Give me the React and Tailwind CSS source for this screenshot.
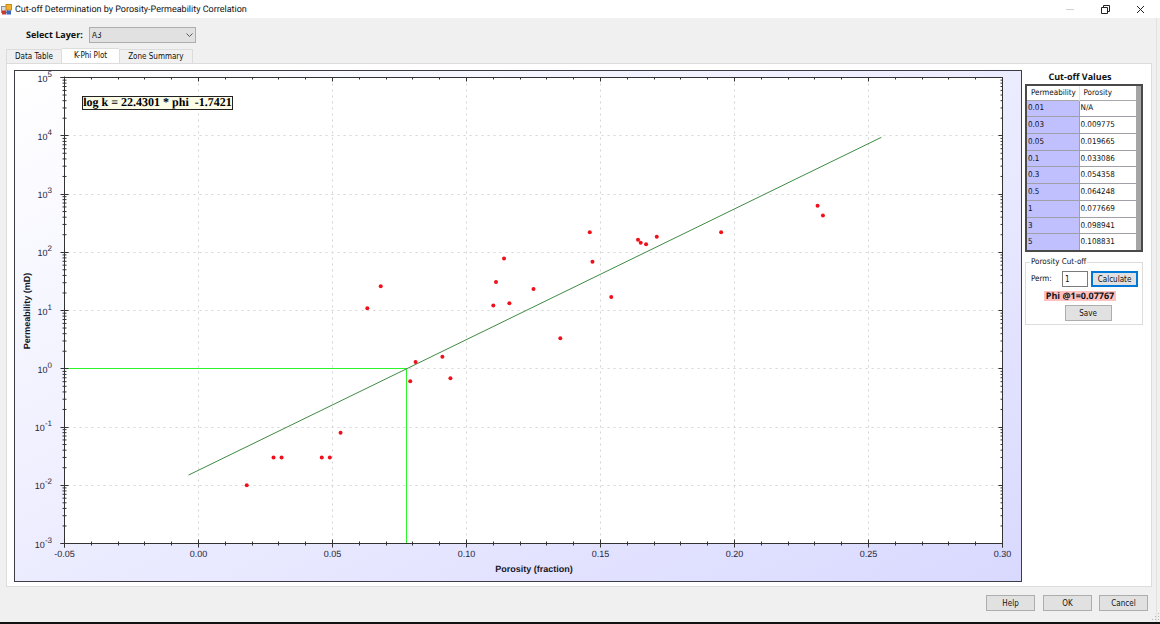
import React, { useState } from 'react';

const LAYERS = ['A1', 'A2', 'A3', 'B1'];

const TABS = [
    { id: 'data', label: 'Data Table' },
    { id: 'plot', label: 'K-Phi Plot' },
    { id: 'zones', label: 'Zone Summary' },
];

// [porosity (fraction), permeability (mD)]
const SAMPLES = [
    [0.018, 0.01], [0.028, 0.03], [0.031, 0.03], [0.046, 0.03], [0.049, 0.03],
    [0.053, 0.08], [0.063, 10.9], [0.068, 26], [0.079, 0.61], [0.081, 1.3],
    [0.091, 1.6], [0.094, 0.69], [0.11, 12.2], [0.111, 31], [0.114, 78],
    [0.116, 13.3], [0.125, 23.4], [0.135, 3.35], [0.146, 220], [0.147, 69],
    [0.154, 17], [0.164, 164], [0.165, 146], [0.167, 137], [0.171, 185],
    [0.195, 220], [0.231, 630], [0.233, 427],
];

const CUTOFFS = [
    ['0.01', 'N/A'],
    ['0.03', '0.009775'],
    ['0.05', '0.019665'],
    ['0.1', '0.033086'],
    ['0.3', '0.054358'],
    ['0.5', '0.064248'],
    ['1', '0.077669'],
    ['3', '0.098941'],
    ['5', '0.108831'],
];

// log k = SLOPE * phi + INTERCEPT
const SLOPE = 22.4301;
const INTERCEPT = -1.7421;

const phiAt = (perm) => (Math.log10(perm) - INTERCEPT) / SLOPE;

// Plot area inside the 1008 x 512 chart
const LEFT = 50.5;
const RIGHT = 988.5;
const TOP = 7.5;
const BOTTOM = 473.5;

const xOf = (phi) => LEFT + ((phi + 0.05) / 0.35) * (RIGHT - LEFT);
const yOf = (logK) => TOP + ((5 - logK) / 8) * (BOTTOM - TOP);
const snap = (v) => Math.floor(v) + 0.5;

const DECADES = [5, 4, 3, 2, 1, 0, -1, -2, -3];
const X_STEPS = Array.from({ length: 36 }, (_, i) => i);

function KPhiPlot({ perm }) {
    const phi = phiAt(perm);
    const cutX = snap(xOf(phi));
    const cutY = snap(yOf(Math.log10(perm)));

    return (
        <svg
            viewBox="0 0 1008 512"
            className="block h-auto w-full font-['Liberation_Sans',sans-serif]"
            role="img"
            aria-label="Permeability against porosity"
        >
            <defs>
                <linearGradient id="chartBg" x1="0" y1="0" x2="1" y2="1">
                    <stop offset="0" stopColor="#ffffff" />
                    <stop offset="1" stopColor="#d9d9ff" />
                </linearGradient>
            </defs>
            <rect x="0.5" y="0.5" width="1007" height="511" fill="url(#chartBg)" stroke="#3c3c46" />
            <rect x={LEFT} y={TOP} width={RIGHT - LEFT} height={BOTTOM - TOP} fill="#fff" />

            {/* grid */}
            <g stroke="#d4d4d4" strokeDasharray="2 4">
                {DECADES.slice(1, -1).map((d) => (
                    <line key={d} x1={LEFT + 3} x2={RIGHT} y1={snap(yOf(d))} y2={snap(yOf(d))} />
                ))}
                {[0, 0.05, 0.1, 0.15, 0.2, 0.25].map((p) => (
                    <line key={p} x1={snap(xOf(p))} x2={snap(xOf(p))} y1={TOP} y2={BOTTOM} />
                ))}
            </g>

            {/* cut-off */}
            <path d={`M${LEFT} ${cutY}H${cutX}V${BOTTOM}`} fill="none" stroke="#2cf52c" />

            {/* axes */}
            <g stroke="#333">
                <path d={`M${LEFT - 4} ${TOP}H${RIGHT}V${BOTTOM + 4}`} fill="none" />
                <path d={`M${LEFT} ${TOP - 1}V${BOTTOM + 4}M${LEFT - 4} ${BOTTOM}H${RIGHT}`} />
                {X_STEPS.map((i) => {
                    const x = snap(LEFT + (i / 35) * (RIGHT - LEFT));
                    const major = i % 5 === 0;
                    return (
                        <path
                            key={i}
                            d={`M${x} ${BOTTOM - (major ? 4 : 2)}v${major ? 8 : 4}M${x} ${TOP}v${major ? 4 : 2}`}
                        />
                    );
                })}
                {DECADES.map((d) => (
                    <path key={d} d={`M${LEFT - 4} ${snap(yOf(d))}h8M${RIGHT} ${snap(yOf(d))}h-4`} />
                ))}
                {DECADES.slice(1).map((d) =>
                    [2, 3, 4, 5, 6, 7, 8, 9].map((m) => {
                        const y = yOf(d + Math.log10(m));
                        return <path key={`${d}-${m}`} d={`M${LEFT - 2} ${y}h4M${RIGHT} ${y}h-2`} />;
                    })
                )}
            </g>

            {/* regression line */}
            <line
                x1={xOf(-0.0037)}
                y1={yOf(SLOPE * -0.0037 + INTERCEPT)}
                x2={xOf(0.2548)}
                y2={yOf(SLOPE * 0.2548 + INTERCEPT)}
                stroke="#3f8a44"
            />

            {SAMPLES.map(([p, k]) => (
                <circle key={`${p}-${k}`} cx={xOf(p)} cy={yOf(Math.log10(k))} r="2" fill="#f0101c" />
            ))}

            {/* labels */}
            <g className="text-[9px]" fill="#26263a">
                {DECADES.map((d) => (
                    <text key={d} x="38" y={yOf(d) + 4} textAnchor="end">
                        10<tspan dy="-5" className="text-[8px]">{d}</tspan>
                    </text>
                ))}
                {[-0.05, 0, 0.05, 0.1, 0.15, 0.2, 0.25, 0.3].map((p) => (
                    <text key={p} x={xOf(p)} y={BOTTOM + 13} textAnchor="middle">
                        {p.toFixed(2)}
                    </text>
                ))}
            </g>
            <g className="text-[9px] font-bold" fill="#16161f" textAnchor="middle">
                <text x="520" y="502">Porosity (fraction)</text>
                <text transform="translate(16 241) rotate(-90)">Permeability (mD)</text>
            </g>

            {/* equation */}
            <rect x="68.5" y="26.5" width="150" height="13" fill="#fbfbe6" stroke="#222" />
            <text
                x="143.5"
                y="36"
                textAnchor="middle"
                className="whitespace-pre font-['Liberation_Serif',serif] text-[12px] font-bold"
            >
                {'log k = 22.4301 * phi  -1.7421'}
            </text>
        </svg>
    );
}

function CutoffTable() {
    return (
        <div className="flex border-2 border-[#4a4a4a] bg-[#a5a5a5] pr-[5px]">
            <table
                aria-labelledby="cutoff-title"
                className="h-[164px] w-full table-fixed border-collapse bg-white text-left"
            >
                <thead>
                    <tr className="h-[14px] border-b border-[#a8a8a8]">
                        <th className="w-[52px] border-r border-[#e2e2e2] p-0 pl-1 font-normal">Permeability</th>
                        <th className="p-0 pl-1 font-normal">Porosity</th>
                    </tr>
                </thead>
                <tbody>
                    {CUTOFFS.map(([k, phi]) => (
                        <tr key={k} className="border-b border-[#a0a0a8] last:border-b-0">
                            <td className="border-r border-[#a0a0a8] bg-[#c0c0ff] p-0 pl-px">{k}</td>
                            <td className="p-0 pl-px">{phi}</td>
                        </tr>
                    ))}
                </tbody>
            </table>
        </div>
    );
}

function PushButton({ className = '', ...props }) {
    return (
        <button
            type="button"
            className={`h-4 bg-[#e1e1e1] pt-px leading-none ${className}`}
            {...props}
        />
    );
}

function App() {
    const [layer, setLayer] = useState('A3');
    const [tab, setTab] = useState('plot');
    const [permText, setPermText] = useState('1');
    const [perm, setPerm] = useState(1);

    const handleCalculate = () => {
        const value = parseFloat(permText);
        if (value > 0) {
            setPerm(value);
        }
    };

    return (
        <div className="flex min-h-screen flex-col border-b-2 border-[#111] bg-[#f0f0f0] font-['DejaVu_Sans_Condensed','DejaVu_Sans',sans-serif] text-[8px] leading-3 text-[#111] [text-rendering:geometricPrecision]">
            {/* title bar */}
            <header className="flex h-[18px] items-center bg-white pr-[15px] pl-px">
                <svg viewBox="0 0 11 11" className="size-[11px]" aria-hidden="true">
                    <rect x="0.5" y="2.5" width="6" height="6" fill="#d8dce4" stroke="#8a8f9c" />
                    <rect x="5" y="0.5" width="5.5" height="5.5" fill="#f3b32c" stroke="#c98a1a" />
                    <rect x="1" y="6.5" width="4" height="4" fill="#cc3a2c" />
                    <rect x="5.5" y="6.5" width="4.5" height="4" fill="#3b67c4" />
                </svg>
                <h1 className="ml-[3px] pt-px font-['Roboto',sans-serif] text-[9px]">
                    Cut-off Determination by Porosity-Permeability Correlation
                </h1>
                <div className="ml-auto flex gap-[26px]">
                    <button type="button" aria-label="Minimize" disabled>
                        <svg viewBox="0 0 9 9" className="size-[9px]">
                            <path d="M0 4.5h8" stroke="#d0d0d0" />
                        </svg>
                    </button>
                    <button type="button" aria-label="Restore">
                        <svg viewBox="0 0 9 9" className="size-[9px]" fill="none" stroke="#222">
                            <path d="M0.5 2.5h6v6h-6zM2.5 2.5v-2h6v6h-2" />
                        </svg>
                    </button>
                    <button type="button" aria-label="Close">
                        <svg viewBox="0 0 9 9" className="size-[9px]" stroke="#222">
                            <path d="M1 1l7 7M8 1l-7 7" />
                        </svg>
                    </button>
                </div>
            </header>

            <main className="mr-[3px] flex grow flex-col border-r border-[#e2e2e2] pr-1 pl-[6px]">
                <div className="flex h-[30px] items-center gap-[6px] pt-1 pl-5">
                    <label
                        htmlFor="layer"
                        className="w-[57px] font-['Open_Sans',sans-serif] text-[9px] font-bold whitespace-nowrap"
                    >
                        Select Layer:
                    </label>
                    <div className="relative">
                        <select
                            id="layer"
                            value={layer}
                            onChange={(e) => setLayer(e.target.value)}
                            className="block h-4 w-[107px] appearance-none border border-[#adadad] bg-[#e1e1e1] pt-px pl-0.5 leading-none"
                        >
                            {LAYERS.map((l) => (
                                <option key={l}>{l}</option>
                            ))}
                        </select>
                        <svg
                            viewBox="0 0 7 5"
                            className="pointer-events-none absolute top-[6px] right-[3px] h-[5px] w-[7px]"
                            fill="none"
                            stroke="#555"
                        >
                            <path d="M0.5 0.5l3 3 3-3" />
                        </svg>
                    </div>
                </div>

                <div role="tablist" className="flex h-[15px] items-end">
                    {TABS.map((t) => (
                        <button
                            key={t.id}
                            type="button"
                            role="tab"
                            aria-selected={tab === t.id}
                            onClick={() => setTab(t.id)}
                            className={
                                tab === t.id
                                    ? 'h-[15px] border-t border-[#dcdcdc] bg-white px-3'
                                    : 'h-[14px] border border-b-0 border-[#dcdcdc] bg-[#f0f0f0] px-2 pt-px'
                            }
                        >
                            {t.label}
                        </button>
                    ))}
                </div>

                <div role="tabpanel" className="border border-[#dcdcdc] bg-white pt-[6px] pr-2 pb-1 pl-[7px]">
                    {tab === 'plot' && (
                        <div className="flex items-start gap-[3px]">
                            <div className="min-w-0 grow">
                                <KPhiPlot perm={perm} />
                            </div>

                            <aside className="w-[118px] shrink-0">
                                <h2
                                    id="cutoff-title"
                                    className="py-px pr-2 text-center font-['Open_Sans',sans-serif] text-[9px] font-bold"
                                >
                                    Cut-off Values
                                </h2>
                                <CutoffTable />

                                <fieldset className="mt-1 border border-[#dcdcdc] px-1 pb-[3px]">
                                    <legend className="px-px">Porosity Cut-off</legend>
                                    <div className="flex items-center pt-[3px]">
                                        <label htmlFor="perm" className="w-8 pl-px">Perm:</label>
                                        <input
                                            id="perm"
                                            type="text"
                                            value={permText}
                                            onChange={(e) => setPermText(e.target.value)}
                                            className="mr-[3px] h-4 w-[26px] border border-[#7a7a7a] bg-white px-0.5"
                                        />
                                        <PushButton className="grow border-2 border-[#0078d7]" onClick={handleCalculate}>
                                            Calculate
                                        </PushButton>
                                    </div>
                                    <div className="flex flex-col items-center gap-1 pt-1 pl-2">
                                        <output
                                            htmlFor="perm"
                                            className="mr-4 bg-[#ffc0c0] px-0.5 font-['Open_Sans',sans-serif] text-[9px] leading-[10px] font-bold"
                                        >
                                            Phi @{perm}={phiAt(perm).toFixed(5)}
                                        </output>
                                        <PushButton className="w-[47px] border border-[#adadad]">Save</PushButton>
                                    </div>
                                </fieldset>
                            </aside>
                        </div>
                    )}
                </div>

                <footer className="mt-auto flex justify-end pt-2 pr-1 pb-[11px]">
                    <PushButton className="mr-2 w-[49px] border border-[#adadad]">Help</PushButton>
                    <PushButton className="mr-[7px] w-[49px] border border-[#adadad]">OK</PushButton>
                    <PushButton className="w-[49px] border border-[#adadad]">Cancel</PushButton>
                </footer>
            </main>

            {/* size grip */}
            <svg viewBox="0 0 8 8" className="pointer-events-none absolute right-0 bottom-[3px] size-2" fill="#b4b4b4">
                <path d="M6 0h1v1H6zM6 3h1v1H6zM3 3h1v1H3zM6 6h1v1H6zM3 6h1v1H3zM0 6h1v1H0z" />
            </svg>
        </div>
    );
}

export default App;
